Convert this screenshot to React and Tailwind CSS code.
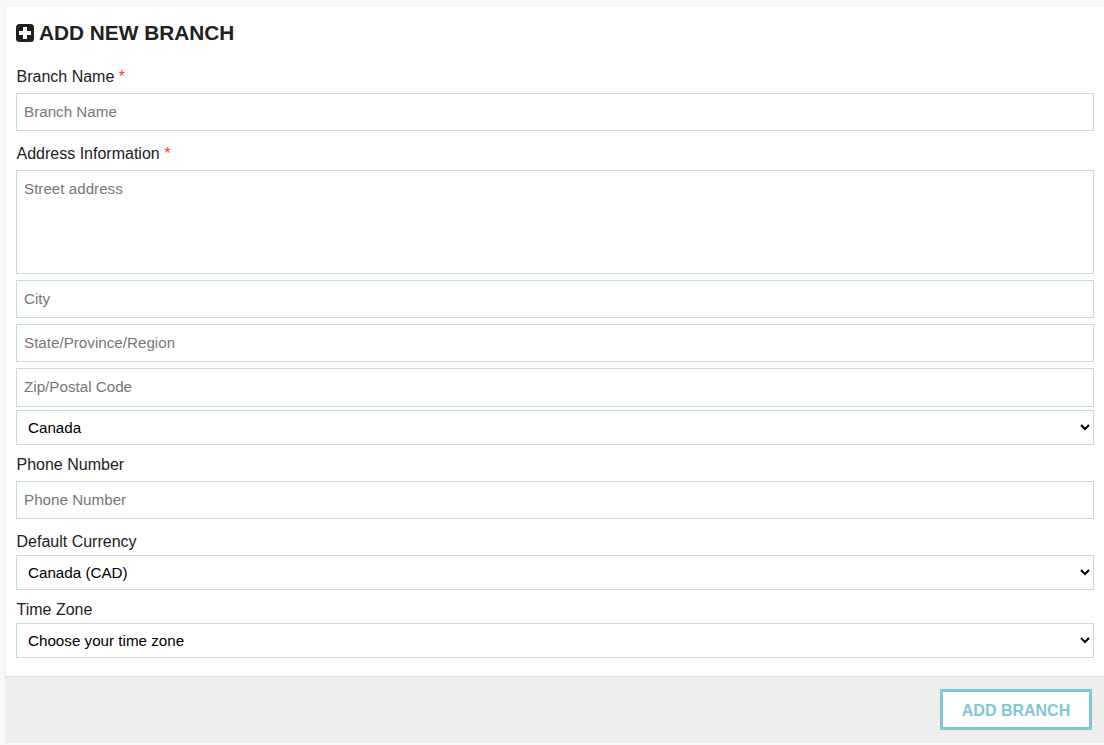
export default function App() {
  const inputClass = "block h-[38px] w-full border border-[#c5dbe0] bg-white pb-[2px] pl-[7px] pr-2 text-[15.2px] text-[#212529] outline-none placeholder:text-[#777]"
  const selectClass = "block h-[35px] w-full border border-[#c5dbe0] bg-white pl-[7px] pr-2 text-[15.2px] text-black outline-none"
  const labelClass = "block h-6 pl-[0.5px] text-base leading-6 text-[#212121]"

  return (
    <div className="h-[745px] overflow-hidden bg-[#f8f8f8] pt-[5px] pl-[5px] font-['Liberation_Sans',Arial,sans-serif]">
      <div className="h-[738px] border-t border-l border-[#ececec] bg-white">
        <div className="h-[670px] pl-[10px] pr-[10px]">
          {/* Header */}
          <h2 className="flex h-[54px] items-center gap-[5px] text-[20.8px] font-bold text-[#212121]">
            <svg width="18" height="18" viewBox="0 0 18 18" className="shrink-0">
              <rect width="18" height="18" rx="3.5" fill="#212121" />
              <path d="M7 3h4v4h4v4h-4v4H7v-4H3V7h4z" fill="#fff" />
            </svg>
            ADD NEW BRANCH
          </h2>

          <label className={`${labelClass} mt-[5px]`}>
            Branch Name <span className="text-[#f44336]">*</span>
          </label>
          <input className={`${inputClass} mt-[4px]`} placeholder="Branch Name" />

          <label className={`${labelClass} mt-[11px]`}>
            Address Information <span className="text-[#f44336]">*</span>
          </label>
          <textarea
            className="mt-[4px] block h-[104px] w-full resize-none border border-[#c5dbe0] bg-white py-2 pl-[7px] pr-2 text-[15.2px] leading-[20px] text-[#212529] outline-none placeholder:text-[#777]"
            placeholder="Street address"
          />
          <input className={`${inputClass} mt-[6px]`} placeholder="City" />
          <input className={`${inputClass} mt-[6px]`} placeholder="State/Province/Region" />
          <input className={`${inputClass} mt-[6px] h-[39px]`} placeholder="Zip/Postal Code" />
          <select className={`${selectClass} mt-[3px]`} defaultValue="Canada">
            <option>Canada</option>
          </select>

          <label className={`${labelClass} mt-[8px]`}>Phone Number</label>
          <input className={`${inputClass} mt-[4px]`} placeholder="Phone Number" />

          <label className={`${labelClass} mt-[11px]`}>Default Currency</label>
          <select className={`${selectClass} mt-[1px]`} defaultValue="Canada (CAD)">
            <option>Canada (CAD)</option>
          </select>

          <label className={`${labelClass} mt-[8px]`}>Time Zone</label>
          <select className={`${selectClass} mt-[1px]`} defaultValue="Choose your time zone">
            <option>Choose your time zone</option>
          </select>
        </div>

        {/* Footer */}
        <div className="flex h-[67px] items-start justify-end border-t border-[#dcdcdc] bg-[#eeeeee] pt-3 pr-3">
          <button className="h-[41px] w-[152px] border-[3px] border-[#7fc7d3] bg-white pt-[2px] text-base font-bold text-[#7fc7d3]">
            ADD BRANCH
          </button>
        </div>
      </div>
    </div>
  )
}
